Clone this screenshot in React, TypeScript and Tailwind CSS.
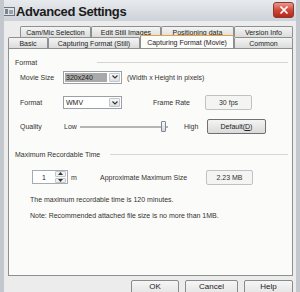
import { X } from 'lucide-react';

const font = { fontFamily: '"Liberation Sans", Arial, sans-serif' };

function Chevron() {
  return (
    <svg width="6" height="4" viewBox="0 0 6 4">
      <path d="M0.5 0.5 L3 3 L5.5 0.5" fill="none" stroke="#333" strokeWidth="1.2" />
    </svg>
  );
}

function Combo({ value, selected }: { value: string; selected?: boolean }) {
  return (
    <div className="flex h-[13px] w-[59px] items-center border border-[#9aa0a6] bg-white">
      <div className="flex flex-1 items-center px-[1px]">
        <span
          className={
            selected
              ? 'flex h-[9px] w-[42px] items-center bg-[#a9a9a9] pl-[1px] text-[#222]'
              : 'pl-[1px] text-[#222]'
          }
        >
          {value}
        </span>
      </div>
      <div className="mr-[1px] flex h-[9px] w-[11px] items-center justify-center rounded-[1px] border border-[#c2c7cc] bg-gradient-to-b from-[#f7f7f7] to-[#dcdfe3]">
        <Chevron />
      </div>
    </div>
  );
}

function ReadBox({ value }: { value: string }) {
  return (
    <div className="flex h-[15px] w-[47px] items-center justify-center rounded-[2px] border border-[#bfc3c7] bg-[#f4f4f2] text-[#333]">
      {value}
    </div>
  );
}

function Tab({ label, w, selected }: { label: string; w: string; selected?: boolean }) {
  return (
    <div
      className={
        selected
          ? `${w} relative z-10 -mb-[1px] -mt-[2px] flex h-[13px] items-center justify-center rounded-t-[2px] border border-b-0 border-[#8e8f8f] border-t-[#e8a23c] bg-[#fbfbf9] text-[#222]`
          : `${w} flex h-[11px] items-center justify-center rounded-t-[2px] border border-b-0 border-[#8e8f8f] bg-gradient-to-b from-[#f4f4f4] to-[#dcdcdc] text-[#222]`
      }
    >
      {label}
    </div>
  );
}

function Group({ title, lineFrom }: { title: string; lineFrom: string }) {
  return (
    <div className="flex h-[10px] items-center pl-[6px] pr-[4px] text-[#333]">
      <span className={lineFrom}>{title}</span>
      <div className="h-[1px] flex-1 bg-[#d5d5d5]" />
    </div>
  );
}

function BottomButton({ label, w }: { label: string; w: string }) {
  return (
    <div
      className={`${w} flex h-[16px] items-start justify-center rounded-[2px] border border-[#8a8a8a] bg-gradient-to-b from-[#f6f6f6] to-[#e2e2e2] pt-[2px] text-[8px] text-[#222]`}
    >
      {label}
    </div>
  );
}

export default function App() {
  return (
    <div
      className="relative h-[292px] w-[300px] overflow-hidden border-x-[4px] border-[#c3c8ce] bg-[#ececec] text-[7px] leading-none"
      style={font}
    >
      {/* title bar */}
      <div className="-mx-[4px] flex h-[21px] items-center bg-gradient-to-b from-[#e8ebee] to-[#cdd2d8] pl-[3px] pr-[6px]">
        <svg width="12" height="9" viewBox="0 0 12 9" className="mt-[2px]">
          <rect x="0.5" y="0.5" width="11" height="8" fill="#dfe2e6" stroke="#6d747c" />
          <rect x="2" y="2" width="3" height="5" fill="#7b838c" />
          <rect x="6" y="3" width="4" height="4" fill="#9aa2aa" />
        </svg>
        <span className="ml-[1px] mt-[1px] text-[13px] font-bold tracking-[-0.4px] text-[#1b1b1b]">
          Advanced Settings
        </span>
        <div className="ml-auto mt-[-1px] flex h-[16px] w-[21px] items-center justify-center rounded-[3px] border border-[#8a3a34] bg-gradient-to-b from-[#e9988c] via-[#cf4a3a] to-[#b5281c]">
          <X size={12} strokeWidth={3.5} color="#fff" />
        </div>
      </div>

      <div className="pl-[4px] pr-[3px]">
        {/* tabs */}
        <div className="mt-[5px] flex pl-[12px]">
          <Tab label="Cam/Mic Selection" w="w-[72px]" />
          <Tab label="Edit Still Images" w="w-[71px]" />
          <Tab label="Positioning data" w="w-[74px]" />
          <Tab label="Version Info" w="w-[60px]" />
        </div>
        <div className="flex">
          <Tab label="Basic" w="w-[40px]" />
          <Tab label="Capturing Format (Still)" w="w-[92px]" />
          <Tab label="Capturing Format (Movie)" w="w-[94px]" selected />
          <Tab label="Common" w="w-[59px]" />
        </div>

        {/* panel */}
        <div className="h-[228px] border border-[#8e8f8f] bg-[#fbfbf9] text-[#333]">
          <div className="mt-[8px]">
            <Group title="Format" lineFrom="w-[82px]" />
          </div>

          <div className="mt-[3px] flex h-[14px] items-center pl-[11px]">
            <span className="w-[43px]">Movie Size</span>
            <Combo value="320x240" selected />
            <span className="ml-[5px]">(Width x Height in pixels)</span>
          </div>

          <div className="mt-[11px] flex h-[15px] items-center pl-[11px]">
            <span className="w-[43px]">Format</span>
            <Combo value="WMV" />
            <span className="ml-[31px] w-[52px]">Frame Rate</span>
            <ReadBox value="30 fps" />
          </div>

          <div className="mt-[9px] flex h-[15px] items-center pl-[11px]">
            <span className="w-[44px]">Quality</span>
            <span className="w-[16px]">Low</span>
            <div className="relative flex h-[12px] w-[88px] items-center">
              <div className="h-[2px] w-full border-y border-[#b5b5b5] bg-[#e4e4e4]" />
              <div className="absolute right-[2px] top-0 h-[11px] w-[5px] rounded-[1px] border border-[#7f8790] bg-gradient-to-b from-[#fafafa] to-[#d3d7db]" />
            </div>
            <span className="ml-[16px] w-[23px]">High</span>
            <div className="flex h-[15px] w-[59px] items-center justify-center rounded-[2px] border border-[#707070] bg-gradient-to-b from-[#f4f4f4] to-[#dadada] text-[#222]">
              Default(<span className="underline">D</span>)
            </div>
          </div>

          <div className="mt-[15px]">
            <Group title="Maximum Recordable Time" lineFrom="w-[95px]" />
          </div>

          <div className="mt-[10px] flex h-[16px] items-center pl-[23px]">
            <div className="flex h-[14px] w-[36px] items-center border border-[#a5abb2] bg-white">
              <span className="flex-1 text-center text-[#222]">1</span>
              <div className="mr-[1px] flex h-[12px] w-[11px] flex-col gap-[1px]">
                <div className="flex flex-1 items-center justify-center rounded-[1px] border border-[#c2c7cc] bg-[#eef0f2]">
                  <svg width="5" height="3" viewBox="0 0 5 3"><path d="M0 3 L2.5 0 L5 3Z" fill="#333" /></svg>
                </div>
                <div className="flex flex-1 items-center justify-center rounded-[1px] border border-[#c2c7cc] bg-[#eef0f2]">
                  <svg width="5" height="3" viewBox="0 0 5 3"><path d="M0 0 L2.5 3 L5 0Z" fill="#333" /></svg>
                </div>
              </div>
            </div>
            <span className="ml-[3px] w-[29px]">m</span>
            <span className="w-[106px]">Approximate Maximum Size</span>
            <ReadBox value="2.23 MB" />
          </div>

          <div className="mt-[9px] flex h-[10px] items-center pl-[21px]">
            The maximum recordable time is 120 minutes.
          </div>
          <div className="mt-[6px] flex h-[10px] items-center pl-[21px]">
            Note: Recommended attached file size is no more than 1MB.
          </div>
        </div>

        {/* buttons */}
        <div className="mt-[4px] flex justify-end gap-[6px] pr-[0px]">
          <BottomButton label="OK" w="w-[48px]" />
          <BottomButton label="Cancel" w="w-[53px]" />
          <BottomButton label="Help" w="w-[49px]" />
        </div>
      </div>
    </div>
  );
}
